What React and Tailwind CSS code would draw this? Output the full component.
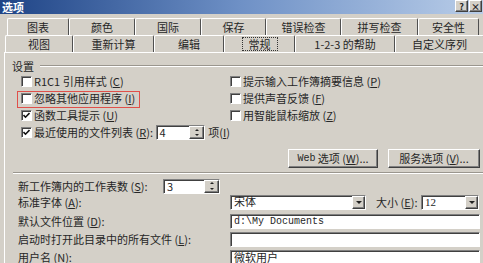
import React from 'react';

const U = ({ children }) => <span className="underline">{children}</span>;

const sunken =
  'bg-white border border-t-[#808080] border-l-[#808080] border-b-white border-r-white shadow-[inset_1px_1px_0_#404040]';
const raised =
  'border border-t-white border-l-white border-b-[#404040] border-r-[#404040] shadow-[inset_-1px_-1px_0_#808080]';

function Check({ checked }) {
  return (
    <span className={`w-[11px] h-[11px] shrink-0 flex items-center justify-center ${sunken}`}>
      {checked && (
        <svg width="7" height="7" viewBox="0 0 7 7">
          <path d="M0.5 3 L2.5 5.2 L6.5 1" stroke="#111" strokeWidth="1.6" fill="none" />
        </svg>
      )}
    </span>
  );
}

function Item({ checked, children }) {
  return (
    <div className="flex items-center gap-[2px] h-[17px]">
      <Check checked={checked} />
      <span className="whitespace-nowrap">{children}</span>
    </div>
  );
}

function Spin() {
  return (
    <div className={`w-[15px] h-full flex flex-col bg-[#d4d0c8] ${raised}`}>
      <div className="flex-1 flex items-center justify-center">
        <span className="w-0 h-0 border-l-[2px] border-r-[2px] border-b-[2px] border-l-transparent border-r-transparent border-b-[#222]" />
      </div>
      <div className="flex-1 flex items-center justify-center">
        <span className="w-0 h-0 border-l-[2px] border-r-[2px] border-t-[2px] border-l-transparent border-r-transparent border-t-[#222]" />
      </div>
    </div>
  );
}

function SpinInput({ value }) {
  return (
    <div className={`w-[57px] h-[15px] flex items-stretch ${sunken}`}>
      <span className="flex-1 pl-[3px] leading-[13px] text-[11px]">{value}</span>
      <Spin />
    </div>
  );
}

function DropBtn() {
  return (
    <div className={`w-[13px] h-full flex items-center justify-center bg-[#d4d0c8] ${raised}`}>
      <span className="w-0 h-0 border-l-[3px] border-r-[3px] border-t-[3px] border-l-transparent border-r-transparent border-t-[#222]" />
    </div>
  );
}

function Select({ value, width }) {
  return (
    <div className={`${width} h-[15px] flex items-stretch ${sunken}`}>
      <span className="flex-1 pl-[3px] leading-[13px] font-['Liberation_Serif','Noto_Sans_CJK_SC',serif] text-[11px]">{value}</span>
      <DropBtn />
    </div>
  );
}

function TextBox({ value }) {
  return (
    <div className={`w-[250px] h-[15px] pl-[3px] leading-[13px] font-['Liberation_Mono','Noto_Sans_CJK_SC',monospace] text-[10px] ${sunken}`}>
      {value}
    </div>
  );
}

function Button({ children, width }) {
  return (
    <div className={`${width} h-[19px] flex items-center justify-center bg-[#d4d0c8] ${raised} whitespace-nowrap`}>
      {children}
    </div>
  );
}

const row1 = [
  ['图表', 'w-[62px]'],
  ['颜色', 'w-[66px]'],
  ['国际', 'w-[66px]'],
  ['保存', 'w-[65px]'],
  ['错误检查', 'w-[75px]'],
  ['拼写检查', 'w-[77px]'],
  ['安全性', 'w-[61px]'],
];

const row2 = [
  ['视图', 'w-[68px]'],
  ['重新计算', 'w-[81px]'],
  ['编辑', 'w-[70px]'],
  ['常规', 'w-[71px]', true],
  ['1-2-3 的帮助', 'w-[100px]'],
  ['自定义序列', 'w-[89px]'],
];

function Tab({ label, width, active }) {
  return (
    <div
      className={`${width} h-[17px] shrink-0 flex items-center justify-center border-t border-l border-white border-r border-r-[#505050] rounded-t-[2px]`}
    >
      {active ? (
        <span className="px-[6px] leading-[12px] border border-dotted border-[#333]">{label}</span>
      ) : (
        <span>{label}</span>
      )}
    </div>
  );
}

export default function App() {
  return (
    <div className="w-[483px] h-[263px] overflow-hidden bg-[#d4d0c8] text-[11px] text-[#262626] font-['Noto_Sans_CJK_SC',sans-serif] leading-none">
      {/* title bar */}
      <div className="h-[14px] flex items-center justify-between bg-gradient-to-r from-[#1f4486] via-[#6f91c6] to-[#b9cde8]">
        <span className="pl-[2px] text-white font-bold text-[11px]">选项</span>
        <div className="flex gap-[1px] self-start mr-[1px]">
          <span className={`w-[13px] h-[12px] flex items-center justify-center bg-[#d4d0c8] text-[9px] font-bold ${raised}`}>?</span>
          <span className={`w-[13px] h-[12px] flex items-center justify-center bg-[#d4d0c8] text-[9px] font-bold ${raised}`}>×</span>
        </div>
      </div>

      {/* tabs */}
      <div className="pt-[4px]">
        <div className="flex pl-[7px]">
          {row1.map(([l, w]) => (
            <Tab key={l} label={l} width={w} />
          ))}
        </div>
        <div className="flex pl-[5px]">
          {row2.map(([l, w, a]) => (
            <Tab key={l} label={l} width={w} active={a} />
          ))}
        </div>
      </div>

      {/* panel */}
      <div className="ml-[4px] border-l border-t border-white pt-[6px]">
        <div className="flex items-center h-[14px] pl-[7px]">
          <span>设置</span>
          <div className="flex-1 ml-[6px] h-[2px] border-t border-[#9a968e] border-b border-b-white" />
        </div>

        <div className="flex">
          <div className="w-[225px] pl-[16px] flex flex-col">
            <Item>R1C1 引用样式 (<U>C</U>)</Item>
            <div className="relative">
              <Item>忽略其他应用程序 (<U>I</U>)</Item>
              <span className="absolute -left-[4px] top-[1px] w-[123px] h-[17px] border border-[#e0504a]" />
            </div>
            <Item checked>函数工具提示 (<U>U</U>)</Item>
            <div className="flex items-center h-[17px]">
              <Check checked />
              <span className="ml-[2px] w-[140px] whitespace-nowrap">最近使用的文件列表 (<U>R</U>):</span>
              <SpinInput value="4" />
              <span className="ml-[3px] whitespace-nowrap">项(<U>I</U>)</span>
            </div>
          </div>
          <div className="flex flex-col">
            <Item>提示输入工作簿摘要信息 (<U>P</U>)</Item>
            <Item>提供声音反馈 (<U>F</U>)</Item>
            <Item>用智能鼠标缩放 (<U>Z</U>)</Item>
          </div>
        </div>

        <div className="flex justify-end gap-[10px] pr-[3px] mt-[8px]">
          <Button width="w-[90px]">
            <span className="font-['Liberation_Mono',monospace] text-[10px]">Web</span>&nbsp;选项 (<U>W</U>)...
          </Button>
          <Button width="w-[92px]">服务选项 (<U>V</U>)...</Button>
        </div>

        <div className="ml-[8px] mt-[4px] h-[2px] border-t border-[#9a968e] border-b border-b-white" />

        <div className="pl-[13px] mt-[4px] flex flex-col">
          <div className="flex items-center h-[16px]">
            <span className="w-[145px]">新工作簿内的工作表数 (<U>S</U>):</span>
            <SpinInput value="3" />
          </div>
          <div className="flex items-center h-[17px]">
            <span className="w-[212px]">标准字体 (<U>A</U>):</span>
            <Select value="宋体" width="w-[136px]" />
            <span className="ml-[10px] w-[45px] whitespace-nowrap">大小 (<U>E</U>):</span>
            <Select value="12" width="w-[58px]" />
          </div>
          <div className="flex items-center h-[18px] mt-[1px]">
            <span className="w-[212px]">默认文件位置 (<U>D</U>):</span>
            <TextBox value="d:\My Documents" />
          </div>
          <div className="flex items-center h-[18px]">
            <span className="w-[212px] whitespace-nowrap">启动时打开此目录中的所有文件 (<U>L</U>):</span>
            <TextBox value="" />
          </div>
          <div className="flex items-center h-[18px]">
            <span className="w-[212px]">用户名 (<U>N</U>):</span>
            <div className={`w-[250px] h-[15px] pl-[3px] leading-[13px] ${sunken}`}>微软用户</div>
          </div>
        </div>
      </div>
    </div>
  );
}
